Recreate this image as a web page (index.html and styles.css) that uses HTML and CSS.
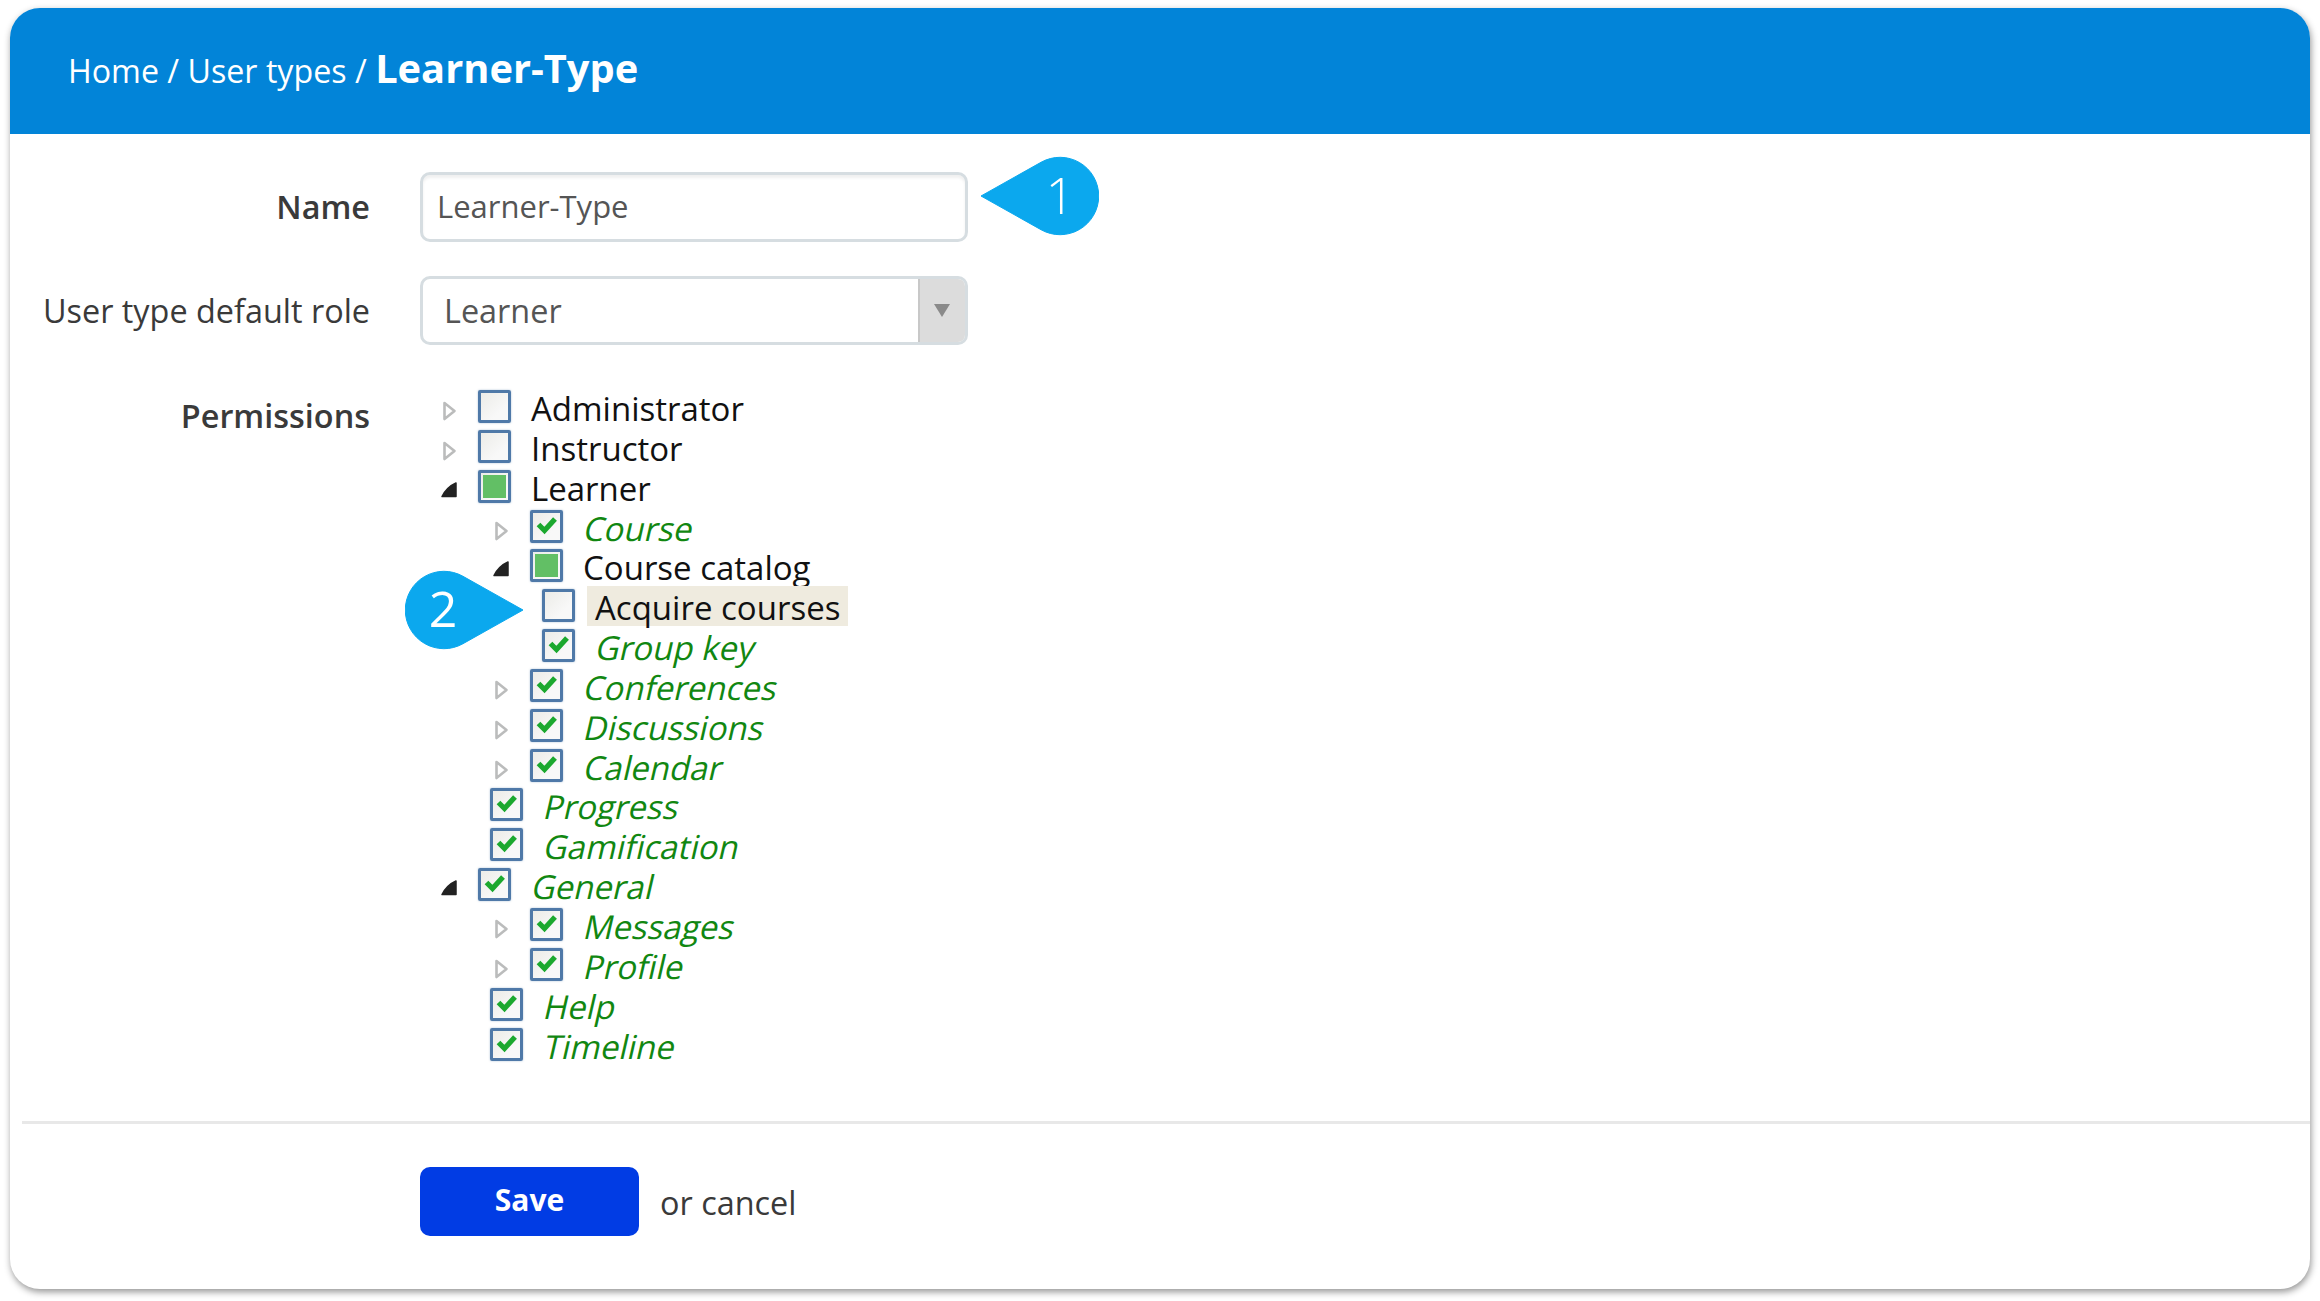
FILE: index.html
```html
<!DOCTYPE html>
<html lang="en">
<head>
<meta charset="utf-8">
<title>Learner-Type</title>
<link rel="stylesheet" href="styles.css">
</head>
<body>
<svg width="0" height="0" class="defs">
  <symbol id="closed" viewBox="0 0 16 20"><path d="M3.5 2 L13.5 10 L3.5 18 Z" fill="#fff" stroke="#bbbcbc" stroke-width="2.6" stroke-linejoin="round"/></symbol>
  <symbol id="open" viewBox="0 0 16 20"><path d="M1 15.5 L15 15.5 L15 2 Q6 6 1 15.5 Z" fill="#222" stroke="#222" stroke-width="1.5" stroke-linejoin="round"/></symbol>
  <symbol id="tick" viewBox="0 0 27 27"><path d="M5.5 11.5 L11.5 17.5 L22 6" fill="none" stroke="#1ba82e" stroke-width="5.2"/></symbol>
</svg>
<main class="card">
  <header class="head"><span class="crumbs">Home / User types / </span><strong class="title">Learner-Type</strong></header>
  <form class="form">
    <label class="lbl lbl-strong">Name</label>
    <input class="input" type="text" value="Learner-Type">
    <label class="lbl">User type default role</label>
    <div class="select">
      <span class="select-value">Learner</span>
      <span class="select-btn"><svg width="16" height="14" viewBox="0 0 16 14"><path d="M0 0 H16 L8 13 Z" fill="#8a8a8a"/></svg></span>
    </div>
    <label class="lbl lbl-strong lbl-perm">Permissions</label>
    <ul class="tree">
      <li class="row"><svg class="arr"><use href="#closed"/></svg><span class="cb"></span><span class="txt">Administrator</span></li>
      <li class="row"><svg class="arr"><use href="#closed"/></svg><span class="cb"></span><span class="txt">Instructor</span></li>
      <li>
        <div class="row"><svg class="arr"><use href="#open"/></svg><span class="cb part"></span><span class="txt">Learner</span></div>
        <ul class="sub">
          <li class="row on"><svg class="arr"><use href="#closed"/></svg><span class="cb"><svg class="tick"><use href="#tick"/></svg></span><span class="txt">Course</span></li>
          <li>
            <div class="row"><svg class="arr"><use href="#open"/></svg><span class="cb part"></span><span class="txt">Course catalog</span></div>
            <ul class="sub">
              <li class="row leaf"><span class="cb"></span><span class="txt sel">Acquire courses</span></li>
              <li class="row leaf on"><span class="cb"><svg class="tick"><use href="#tick"/></svg></span><span class="txt">Group key</span></li>
            </ul>
          </li>
          <li class="row on"><svg class="arr"><use href="#closed"/></svg><span class="cb"><svg class="tick"><use href="#tick"/></svg></span><span class="txt">Conferences</span></li>
          <li class="row on"><svg class="arr"><use href="#closed"/></svg><span class="cb"><svg class="tick"><use href="#tick"/></svg></span><span class="txt">Discussions</span></li>
          <li class="row on"><svg class="arr"><use href="#closed"/></svg><span class="cb"><svg class="tick"><use href="#tick"/></svg></span><span class="txt">Calendar</span></li>
          <li class="row leaf on"><span class="cb"><svg class="tick"><use href="#tick"/></svg></span><span class="txt">Progress</span></li>
          <li class="row leaf on"><span class="cb"><svg class="tick"><use href="#tick"/></svg></span><span class="txt">Gamification</span></li>
        </ul>
      </li>
      <li>
        <div class="row on"><svg class="arr"><use href="#open"/></svg><span class="cb"><svg class="tick"><use href="#tick"/></svg></span><span class="txt">General</span></div>
        <ul class="sub">
          <li class="row on"><svg class="arr"><use href="#closed"/></svg><span class="cb"><svg class="tick"><use href="#tick"/></svg></span><span class="txt">Messages</span></li>
          <li class="row on"><svg class="arr"><use href="#closed"/></svg><span class="cb"><svg class="tick"><use href="#tick"/></svg></span><span class="txt">Profile</span></li>
          <li class="row leaf on"><span class="cb"><svg class="tick"><use href="#tick"/></svg></span><span class="txt">Help</span></li>
          <li class="row leaf on"><span class="cb"><svg class="tick"><use href="#tick"/></svg></span><span class="txt">Timeline</span></li>
        </ul>
      </li>
    </ul>
  </form>
  <div class="foot">
    <button class="save" type="button">Save</button>
    <span class="cancel">or cancel</span>
  </div>
</main>
<svg class="callout c1" viewBox="0 0 120 80"><path d="M2 40 L62 6.3 A38.7 38.7 0 1 1 62 73.7 Z" fill="#0ba8ee" stroke="#0ba8ee" stroke-linejoin="round"/><text x="81" y="58" class="digit thin">1</text></svg>
<svg class="callout c2" viewBox="0 0 120 80"><path d="M118 40 L58 6.3 A38.7 38.7 0 1 0 58 73.7 Z" fill="#0ba8ee" stroke="#0ba8ee" stroke-linejoin="round"/><text x="38" y="57" class="digit">2</text></svg>
</body>
</html>
```
FILE: styles.css
```css
* { box-sizing: border-box; }
html, body { margin: 0; padding: 0; }
body {
  position: relative;
  height: 1301px;
  overflow: hidden;
  background: #fff;
  font-family: "Open Sans", "Noto Sans", sans-serif;
  font-size: 32.4px;
  color: #333;
}
.defs { position: absolute; }
.card {
  margin: 8px 10px 0;
  height: 1281px;
  background: #fff;
  border-radius: 30px;
  box-shadow: 1px 3px 7px rgba(0, 0, 0, .42);
  overflow: hidden;
}
.head {
  height: 126px;
  padding: 38px 0 0 58px;
  background: #0284d8;
  color: #fff;
  line-height: 44px;
  white-space: nowrap;
}
.crumbs { font-size: 32.2px; white-space: pre; }
.title { font-size: 39.8px; font-weight: 700; }
.form {
  display: grid;
  grid-template-columns: 360px 1fr;
  column-gap: 50px;
  padding-top: 38px;
}
.lbl {
  text-align: right;
  line-height: 68px;
  color: #3a3a3a;
}
.lbl-strong { font-weight: 600; }
.lbl-perm { line-height: 40px; padding-top: 5px; }
.input, .select {
  width: 548px;
  height: 70px;
  border: 3px solid #d6dde1;
  border-radius: 10px;
  background: #fff;
  color: #555;
  font-family: inherit;
}
.input {
  padding: 0 14px 2px;
  margin-bottom: 34px;
  font-size: 31px;
  box-shadow: inset 0 3px 3px #f0f0f0;
  outline: none;
}
.select {
  display: flex;
  align-items: stretch;
  height: 69px;
  margin-bottom: 45px;
  overflow: hidden;
}
.select-value { flex: 1; padding-left: 21px; line-height: 63px; }
.select-btn {
  width: 47px;
  padding-right: 2px;
  display: flex;
  align-items: center;
  justify-content: center;
  background: #dcdcdc;
  border-left: 2px solid #c8c8c8;
}
.tree, .sub { list-style: none; margin: 0; padding: 0; }
.tree { padding-left: 21px; margin-bottom: 54px; }
.sub { padding-left: 52px; }
.row {
  display: flex;
  align-items: flex-start;
  height: 39.85px;
  font-size: 33px;
  color: #111;
}
.row.on { color: #118711; }
.row.on .txt {
  transform: skewX(-13deg);
  transform-origin: 0 30px;
}
.row.leaf { margin-left: -3px; }
.arr { width: 16px; height: 20px; margin: 11px 21px 0 0; flex: none; }
.cb {
  width: 33px;
  height: 33px;
  flex: none;
  border: 3px solid #4f79a8;
  border-radius: 2px;
  background: linear-gradient(135deg, #ececE8, #f8f8f8 70%);
  box-shadow: 0 0 2px rgba(79, 121, 168, .5);
}
.part::after {
  content: "";
  display: block;
  width: 23px;
  height: 23px;
  margin: 2px;
  background: #62bf65;
}
.tick { display: block; width: 27px; height: 27px; }
.txt {
  margin: -3px 0 0 12px;
  padding: 0 8px;
  height: 40px;
  line-height: 43px;
  white-space: nowrap;
}
.sel { background: #efebdf; }
.foot {
  display: flex;
  align-items: center;
  margin-left: 12px;
  border-top: 3px solid #e8e8e8;
  padding: 43px 0 0 398px;
}
.save {
  width: 219px;
  height: 69px;
  padding: 0 0 4px;
  border: 0;
  border-radius: 10px;
  background: #013ce4;
  color: #fff;
  font: 700 30px "Open Sans", sans-serif;
}
.cancel { margin-left: 21px; color: #3a3a3a; }
.callout { position: absolute; width: 120px; height: 80px; }
.c1 { left: 979px; top: 156px; }
.c2 { left: 405px; top: 570px; }
.digit {
  fill: #fff;
  font-size: 50px;
  text-anchor: middle;
  font-family: "Open Sans", sans-serif;
}
.thin { font-weight: 300; }
```
